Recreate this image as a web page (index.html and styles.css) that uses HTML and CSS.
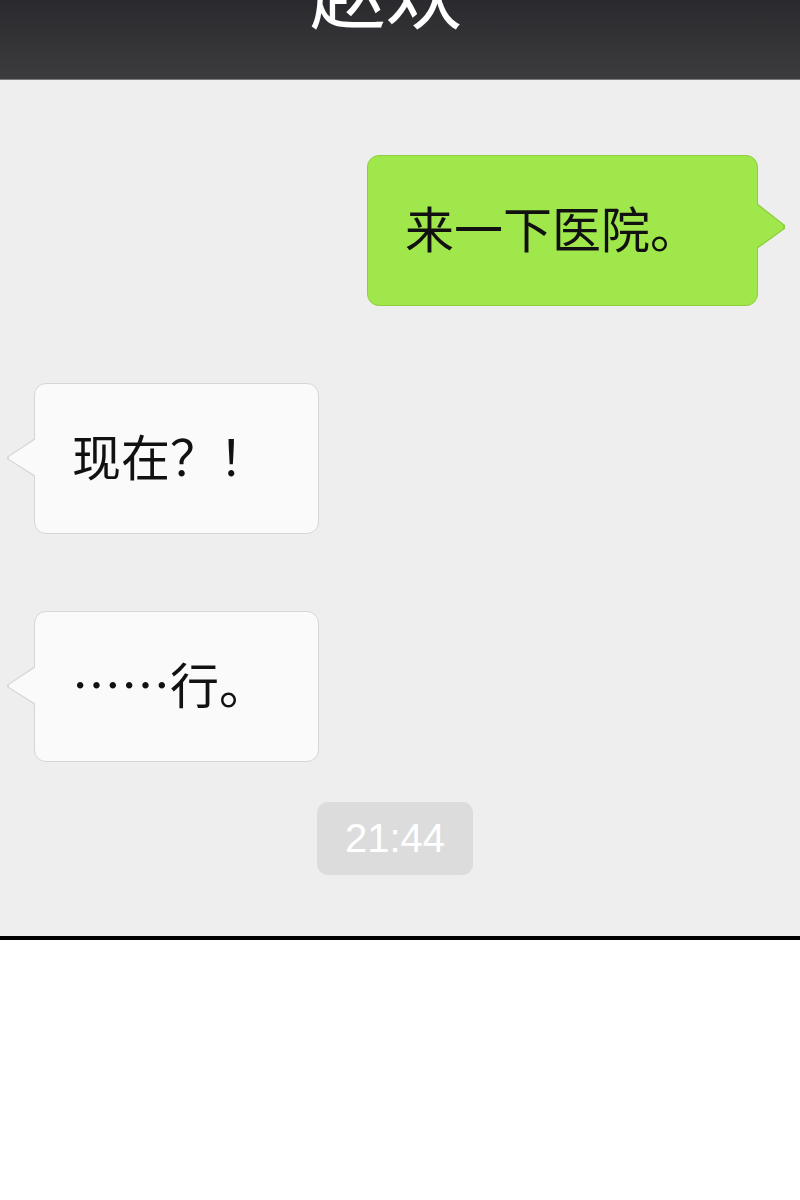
FILE: index.html
```html
<!DOCTYPE html>
<html lang="zh-CN">
<head>
    <meta charset="UTF-8">
    <meta name="viewport" content="width=device-width, initial-scale=1.0">
    <title>赵欢</title>
    <link rel="stylesheet" href="styles.css">
</head>
<body>
    <div class="phone">
        <div class="top-bar">
            <h1 class="contact-name">赵欢</h1>
        </div>
        <div class="chat">
            <div class="msg-row mine">
                <div class="bubble green">来一下医院。</div>
            </div>
            <div class="msg-row theirs">
                <div class="bubble white">现在？！</div>
            </div>
            <div class="msg-row theirs">
                <div class="bubble white">……行。</div>
            </div>
            <div class="time-row">
                <span class="time-label">21:44</span>
            </div>
        </div>
    </div>
</body>
</html>
```

FILE: styles.css
```css
body {
    margin: 0;
    padding: 0;
    background-color: #fff;
    font-family: "Noto Sans CJK SC", "Noto Sans", sans-serif;
}

.phone {
    width: 800px;
}

.top-bar {
    height: 79px;
    overflow: hidden;
    background: linear-gradient(#2a2a2e, #3c3c3f);
    border-bottom: 1px solid #7a7a7c;
    text-align: center;
    padding-right: 28px;
    box-sizing: content-box;
}

.contact-name {
    margin: -48px 0 0;
    font-size: 76px;
    font-weight: normal;
    line-height: 1;
    color: #fff;
}

.chat {
    height: 860px;
    box-sizing: border-box;
    padding-top: 75px;
    background-color: #eeeeee;
    border-bottom: 4px solid #000;
}

.msg-row {
    display: flex;
    margin-bottom: 77px;
}

.msg-row.mine {
    justify-content: flex-end;
    padding-right: 42px;
}

.msg-row.theirs {
    justify-content: flex-start;
    padding-left: 34px;
}

.bubble {
    position: relative;
    box-sizing: border-box;
    height: 151px;
    display: flex;
    align-items: center;
    padding: 0 50px 8px 37px;
    font-size: 49px;
    color: #111;
    border-radius: 12px;
}

.bubble.green {
    background-color: #a0e74c;
    border: 1px solid #8dcf3f;
    padding-right: 58px;
}

.bubble.white {
    background-color: #fafafa;
    border: 1px solid #d6d6d6;
}

/* tails */
.bubble::before,
.bubble::after {
    content: "";
    position: absolute;
}

.bubble.green::before {
    top: 47px;
    right: -28px;
    width: 28px;
    height: 46px;
    background-color: #8dcf3f;
    clip-path: polygon(0 0, 100% 48%, 100% 56%, 0 100%);
}

.bubble.green::after {
    top: 48px;
    right: -26px;
    width: 27px;
    height: 44px;
    background-color: #a0e74c;
    clip-path: polygon(0 0, 100% 48%, 100% 56%, 0 100%);
}

.bubble.white::before {
    top: 54px;
    left: -28px;
    width: 28px;
    height: 39px;
    background-color: #d6d6d6;
    clip-path: polygon(100% 0, 0 48%, 0 54%, 100% 100%);
}

.bubble.white::after {
    top: 55px;
    left: -26px;
    width: 27px;
    height: 37px;
    background-color: #fafafa;
    clip-path: polygon(100% 0, 0 48%, 0 54%, 100% 100%);
}

.time-row {
    display: flex;
    justify-content: center;
    margin-top: -37px;
    padding-right: 10px;
}

.time-label {
    width: 156px;
    height: 73px;
    display: flex;
    align-items: center;
    justify-content: center;
    background-color: #dcdcdc;
    border-radius: 11px;
    color: #fff;
    font-family: "Liberation Sans", Arial, sans-serif;
    font-size: 40px;
}
```
